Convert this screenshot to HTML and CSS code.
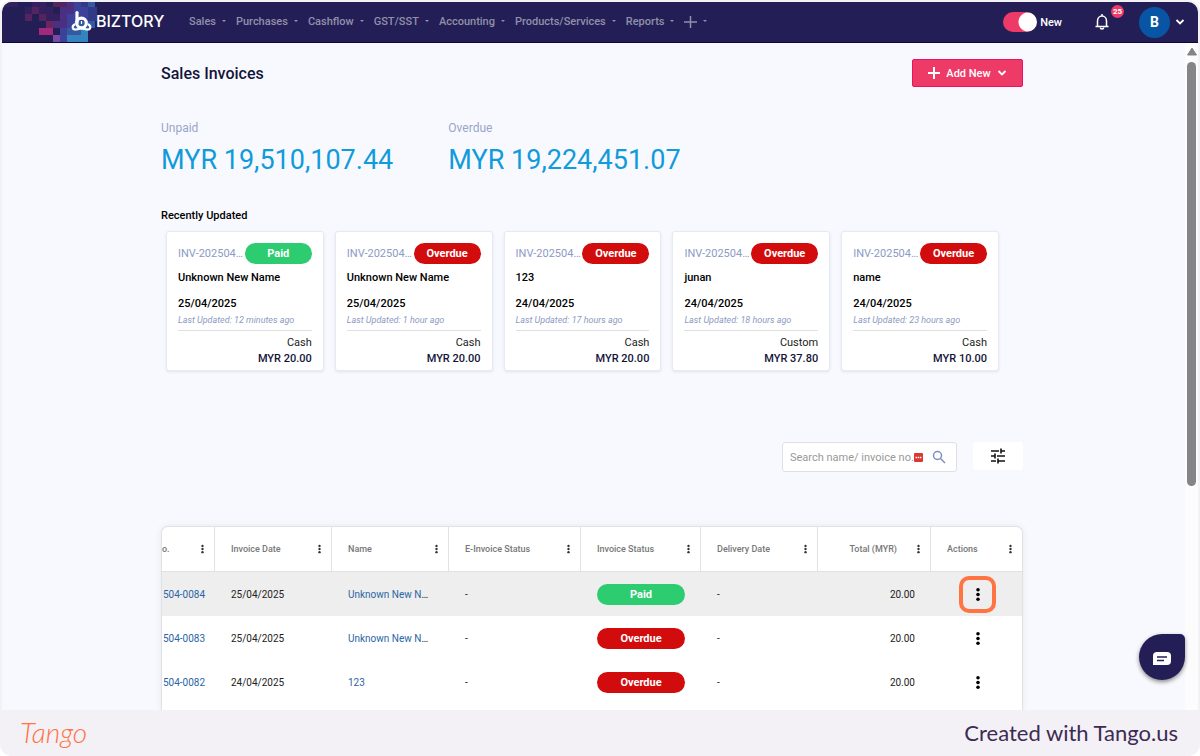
FILE: index.html
```html
<!DOCTYPE html>
<html lang="en">
<head>
  <meta charset="UTF-8">
  <title>Sales Invoices</title>
  <link rel="stylesheet" href="styles.css">
</head>
<body>
  <svg class="sprite" aria-hidden="true">
    <symbol id="dots" viewBox="0 0 4 16">
      <circle cx="2" cy="3" r="1.9"/><circle cx="2" cy="8" r="1.9"/><circle cx="2" cy="13" r="1.9"/>
    </symbol>
    <symbol id="chevron" viewBox="0 0 10 8">
      <path d="M1.5 2l3.5 3.5L8.500 2" fill="none" stroke="currentColor" stroke-width="1.8"/>
    </symbol>
  </svg>

  <div class="app">
    <header class="topbar">
      <svg class="pixels" width="98" height="40" viewBox="0 0 98 40" aria-hidden="true">
        <path fill="#34205e" d="M2 0h14v5H2zM23 5h7v7h-7zM30 0h14v12H30zM44 5h7v14h-7zM51 12h7v14h-7z"/>
        <path fill="#54245f" d="M23 12h7v7h-7zM30 12h7v-7h-7zM37 12h7v7h-7zM51 0h14v5H51z"/>
        <path fill="#69265f" d="M37 26h7v7h-7zM44 19h7v7h-7z"/>
        <path fill="#a12a7c" d="M37 26h14v7H37z"/>
        <path fill="#4a2f82" d="M58 5h7v28h-7zM51 19h7v7h-7zM65 0h7v12h-7z"/>
        <path fill="#7b4aa5" d="M51 33h7v7h-7z"/>
        <path fill="#3c419a" d="M65 12h7v14h-7zM72 0h7v19h-7zM79 5h7v14h-7zM58 26h7v14h-7z"/>
        <path fill="#35599f" d="M65 26h7v7h-7zM72 19h7v14h-7zM79 19h14v7H79zM86 0h7v5h-7z"/>
        <path fill="#3283bf" d="M65 33h14v7H65zM79 26h7v14h-7z"/>
        <path fill="#303a86" d="M86 5h9v14h-9zM79 0h7v5h-7z"/>
      </svg>
      <a class="brand" href="#">
        <svg width="21" height="22" viewBox="0 0 21 22" aria-hidden="true">
          <path d="M6 2.500v10" stroke="#fff" stroke-width="3.200" stroke-linecap="round"/>
          <circle cx="10.500" cy="13" r="4.800" fill="none" stroke="#fff" stroke-width="3.200"/>
          <path d="M3.500 14.500c-3 2-2 5 1 5 3 0 3-1 6-1s3 1 6 1c3 0 4-3 1-5" fill="none" stroke="#fff" stroke-width="2.200" stroke-linecap="round"/>
          <path d="M10.500 11v3" stroke="#fff" stroke-width="1.200"/>
        </svg>
        <span>BIZTORY</span>
      </a>
      <nav class="nav">
        <a href="#">Sales</a>
        <a href="#">Purchases</a>
        <a href="#">Cashflow</a>
        <a href="#">GST/SST</a>
        <a href="#">Accounting</a>
        <a href="#">Products/Services</a>
        <a href="#">Reports</a>
        <a href="#" aria-label="Create">
          <svg width="13" height="13" viewBox="0 0 13 13"><path d="M6.500 1v12M0 7h13" stroke="currentColor" stroke-width="1.500"/></svg>
        </a>
      </nav>
      <div class="account">
        <label class="switch"><input type="checkbox" checked>New</label>
        <button class="bell" aria-label="Notifications">
          <svg width="16" height="18" viewBox="0 0 16 18" fill="none" stroke="#fff" stroke-width="1.500">
            <path d="M1.500 13.500h13M3.500 13V8a4.500 5 0 0 1 9 0v5M8 1v2"/><path d="M6.300 14.500a1.700 1.500 0 0 0 3.400 0"/>
          </svg>
          <span class="count">25</span>
        </button>
        <button class="profile" aria-label="Account">
          <span class="avatar">B</span>
          <svg width="10" height="8"><use href="#chevron"/></svg>
        </button>
      </div>
    </header>

    <div class="view">
      <main class="content">
        <div class="heading">
          <h1>Sales Invoices</h1>
          <button class="add">
            <svg width="12" height="12" viewBox="0 0 12 12"><path d="M6 0v12M0 6h12" stroke="currentColor" stroke-width="2"/></svg>
            Add New
            <svg width="10" height="8"><use href="#chevron"/></svg>
          </button>
        </div>

        <div class="stats">
          <div><p class="label">Unpaid</p><p class="amount">MYR 19,510,107.44</p></div>
          <div><p class="label">Overdue</p><p class="amount">MYR 19,224,451.07</p></div>
        </div>

        <h2>Recently Updated</h2>
        <div class="cards">
          <article class="card">
            <div class="card-top"><span class="number">INV-20250425</span><span class="badge paid">Paid</span></div>
            <p class="name">Unknown New Name</p>
            <p class="date">25/04/2025</p>
            <p class="updated">Last Updated: 12 minutes ago</p>
            <p class="terms">Cash</p>
            <p class="total">MYR 20.00</p>
          </article>
          <article class="card">
            <div class="card-top"><span class="number">INV-20250425</span><span class="badge">Overdue</span></div>
            <p class="name">Unknown New Name</p>
            <p class="date">25/04/2025</p>
            <p class="updated">Last Updated: 1 hour ago</p>
            <p class="terms">Cash</p>
            <p class="total">MYR 20.00</p>
          </article>
          <article class="card">
            <div class="card-top"><span class="number">INV-20250424</span><span class="badge">Overdue</span></div>
            <p class="name">123</p>
            <p class="date">24/04/2025</p>
            <p class="updated">Last Updated: 17 hours ago</p>
            <p class="terms">Cash</p>
            <p class="total">MYR 20.00</p>
          </article>
          <article class="card">
            <div class="card-top"><span class="number">INV-20250424</span><span class="badge">Overdue</span></div>
            <p class="name">junan</p>
            <p class="date">24/04/2025</p>
            <p class="updated">Last Updated: 18 hours ago</p>
            <p class="terms">Custom</p>
            <p class="total">MYR 37.80</p>
          </article>
          <article class="card">
            <div class="card-top"><span class="number">INV-20250424</span><span class="badge">Overdue</span></div>
            <p class="name">name</p>
            <p class="date">24/04/2025</p>
            <p class="updated">Last Updated: 23 hours ago</p>
            <p class="terms">Cash</p>
            <p class="total">MYR 10.00</p>
          </article>
        </div>

        <div class="tools">
          <div class="search">
            <input type="text" placeholder="Search name/ invoice no." aria-label="Search name or invoice number">
            <svg width="9" height="9" viewBox="0 0 9 9"><rect width="9" height="9" rx="1" fill="#da3831"/><path d="M1.500 4.500h6" stroke="#fff" stroke-width="1.300" stroke-dasharray="1.500 .7"/></svg>
            <svg width="14" height="14" viewBox="0 0 14 14" fill="none" stroke="#7f8fc0" stroke-width="1.500"><circle cx="5.500" cy="5.500" r="4"/><path d="M8.500 8.500l4.500 4.500"/></svg>
          </div>
          <button class="filter" aria-label="Filters">
            <svg width="16" height="16" viewBox="0 0 16 16" stroke="#111" stroke-width="1.600"><path d="M1 3h8M11 3h4M11 0.500v5M1 8h4M7 8h8M5 5.500v5M1 13h5M8 13h7M8 10.500v5"/></svg>
          </button>
        </div>

        <div class="grid">
          <table>
            <colgroup><col class="c-no"><col class="c-date"><col class="c-name"><col class="c-einv"><col class="c-status"><col class="c-deliv"><col class="c-total"><col class="c-act"></colgroup>
            <thead>
              <tr>
                <th><div>o.<svg><use href="#dots"/></svg></div></th>
                <th><div>Invoice Date<svg><use href="#dots"/></svg></div></th>
                <th><div>Name<svg><use href="#dots"/></svg></div></th>
                <th><div>E-Invoice Status<svg><use href="#dots"/></svg></div></th>
                <th><div>Invoice Status<svg><use href="#dots"/></svg></div></th>
                <th><div>Delivery Date<svg><use href="#dots"/></svg></div></th>
                <th class="num"><div>Total (MYR)<svg><use href="#dots"/></svg></div></th>
                <th><div>Actions<svg><use href="#dots"/></svg></div></th>
              </tr>
            </thead>
            <tbody>
              <tr class="active">
                <td><a href="#">504-0084</a></td><td>25/04/2025</td><td><a href="#">Unknown New Name</a></td><td>-</td>
                <td><span class="badge paid">Paid</span></td><td>-</td><td class="num">20.00</td>
                <td><button class="more marked" aria-label="Actions"><svg><use href="#dots"/></svg></button></td>
              </tr>
              <tr>
                <td><a href="#">504-0083</a></td><td>25/04/2025</td><td><a href="#">Unknown New Name</a></td><td>-</td>
                <td><span class="badge">Overdue</span></td><td>-</td><td class="num">20.00</td>
                <td><button class="more" aria-label="Actions"><svg><use href="#dots"/></svg></button></td>
              </tr>
              <tr>
                <td><a href="#">504-0082</a></td><td>24/04/2025</td><td><a href="#">123</a></td><td>-</td>
                <td><span class="badge">Overdue</span></td><td>-</td><td class="num">20.00</td>
                <td><button class="more" aria-label="Actions"><svg><use href="#dots"/></svg></button></td>
              </tr>
            </tbody>
          </table>
        </div>
      </main>
      <div class="scrollbar" aria-hidden="true">
        <svg width="12" height="9" viewBox="0 0 12 9"><path d="M6 1l4.500 7h-9z" fill="#858585" stroke="#858585" stroke-linejoin="round"/></svg>
        <div class="thumb"></div>
      </div>
      <button class="chat" aria-label="Chat">
        <svg width="18" height="16" viewBox="0 0 18 16"><path d="M4 1h10a4 4 0 0 1 4 4v5a4 4 0 0 1-4 4H0V5a4 4 0 0 1 4-4z" fill="#fff"/><path d="M4 6h10M4 9.500h7" stroke="#231f56" stroke-width="1.500"/></svg>
      </button>
    </div>
  </div>

  <footer class="footer">
    <a class="tango" href="#">Tango</a>
    <span>Created with Tango.us</span>
  </footer>
</body>
</html>
```
FILE: styles.css
```css
* {
  box-sizing: border-box;
}
html {
  background: #fff;
}
body {
  margin: 0;
  padding: 2px 2px 0;
  height: 100vh;
  display: flex;
  flex-direction: column;
  border-radius: 12px;
  background: #f3f0f6;
  font-family: Roboto, "Liberation Sans", sans-serif;
  font-size: 11px;
  color: #222;
}
h1, h2, p {
  margin: 0;
}
a {
  color: inherit;
  text-decoration: none;
}
button {
  padding: 0;
  border: none;
  background: none;
  font: inherit;
  color: inherit;
  cursor: pointer;
}
.sprite {
  position: absolute;
  width: 0;
  height: 0;
}
.app {
  flex: 1;
  min-height: 0;
  display: flex;
  flex-direction: column;
  border-radius: 10px 10px 0 0;
  overflow: hidden;
  background: #f8f9fe;
}

/* top bar */
.topbar {
  position: relative;
  flex: none;
  height: 41px;
  display: flex;
  align-items: center;
  padding: 0 13px 0 69px;
  background: #231f56;
  border-bottom: 1px solid #0b0540;
  color: #fff;
}
.pixels {
  position: absolute;
  left: 0;
  top: 0;
}
.brand {
  position: relative;
  display: flex;
  align-items: center;
  gap: 4px;
  width: 118px;
  padding-bottom: 2px;
  font-family: Inter, sans-serif;
  font-size: 16px;
  font-weight: 500;
}
.nav {
  display: flex;
  align-items: center;
  gap: 10px;
  padding-bottom: 2px;
  color: #918fab;
  font-weight: 500;
}
.nav a {
  display: flex;
  align-items: center;
  gap: 6px;
}
.nav a::after {
  content: "";
  border: 2px solid transparent;
  border-top-color: currentColor;
  border-bottom: none;
}
.account {
  margin-left: auto;
  display: flex;
  align-items: center;
  font-weight: 500;
}
.switch {
  display: flex;
  align-items: center;
  gap: 3px;
}
.switch input {
  appearance: none;
  width: 34px;
  height: 20px;
  margin: 0;
  border-radius: 10px;
  background: radial-gradient(circle at 25px 10px, #fff 9px, #ee3a66 10px);
}
.bell {
  position: relative;
  height: 18px;
  margin-left: 32px;
}
.count {
  position: absolute;
  left: 17px;
  top: -8px;
  width: 13px;
  height: 13px;
  border-radius: 50%;
  background: #ee3a66;
  font-size: 8px;
  font-weight: 700;
  line-height: 13px;
}
.profile {
  display: flex;
  align-items: center;
  gap: 5px;
  margin-left: 29px;
}
.avatar {
  width: 31px;
  height: 31px;
  border-radius: 50%;
  background: #0855a5;
  font-size: 14px;
  font-weight: 700;
  line-height: 31px;
}

/* page */
.view {
  position: relative;
  flex: 1;
  min-height: 0;
  display: flex;
}
.content {
  width: 90%;
  max-width: 862px;
  margin: 0 auto;
  padding-top: 16px;
  display: flex;
  flex-direction: column;
}
.heading {
  display: flex;
  justify-content: space-between;
  align-items: center;
}
h1 {
  font-size: 16px;
  font-weight: 500;
  color: #14143a;
}
.add {
  display: flex;
  align-items: center;
  justify-content: center;
  gap: 6px;
  width: 111px;
  height: 28px;
  border: 1px solid #ee1160;
  border-radius: 2px;
  background: #ee3a66;
  color: #fff;
  font-weight: 500;
}
.stats {
  display: grid;
  grid-template-columns: repeat(3, 1fr);
  margin-top: 33px;
}
.label {
  font-size: 12px;
  line-height: 16px;
  color: #99a5cb;
}
.amount {
  margin-top: 8px;
  font-size: 27px;
  line-height: 32px;
  color: #119bdb;
}
h2 {
  margin: 33px 0 8px;
  font-size: 11px;
  line-height: 14px;
  font-weight: 500;
  color: #000;
}
.cards {
  display: grid;
  grid-template-columns: repeat(5, 1fr);
  gap: 11px;
  padding: 0 24px 0 5px;
}
.card {
  min-width: 0;
  height: 140px;
  padding: 11px;
  border: 1px solid #e6eaf4;
  border-radius: 3px;
  background: #fff;
  box-shadow: 0 1px 3px #dfe3ee;
}
.card p {
  line-height: 16px;
}
.card-top {
  display: flex;
  align-items: center;
}
.number {
  flex: 1;
  overflow: hidden;
  text-overflow: ellipsis;
  white-space: nowrap;
  color: #8d9ac4;
}
.badge {
  display: block;
  width: 67px;
  height: 21px;
  border-radius: 11px;
  background: #d20c0c;
  color: #fff;
  font-size: 11px;
  font-weight: 700;
  line-height: 21px;
  text-align: center;
}
.badge.paid {
  background: #2ecc71;
}
.name, .date {
  font-weight: 500;
  color: #000;
}
.card .name {
  margin: 6px 0 10px;
}
.card .updated {
  padding-bottom: 2px;
  border-bottom: 1px solid #dfe0e4;
  font-size: 9px;
  font-style: italic;
  color: #8d9ac4;
}
.terms {
  margin-top: 4px;
  text-align: right;
}
.total {
  text-align: right;
  font-weight: 500;
  color: #14143a;
}

/* search and filter */
.tools {
  display: flex;
  justify-content: flex-end;
  gap: 16px;
  margin-top: 71px;
}
.search {
  display: flex;
  align-items: center;
  width: 175px;
  height: 30px;
  padding: 0 10px 0 7px;
  border: 1px solid #dfe0e4;
  border-radius: 3px;
  background: #fff;
}
.search input {
  flex: 1;
  min-width: 0;
  padding: 0;
  border: none;
  outline: none;
  font: inherit;
}
.search input::placeholder {
  color: #999;
}
.search svg:last-child {
  margin-left: 9px;
}
.filter {
  width: 50px;
  height: 28px;
  border-radius: 3px;
  background: #fff;
}
.filter svg {
  display: block;
  margin: 0 auto;
}

/* invoice table */
.grid {
  flex: 1;
  margin-top: 54px;
  border: 1px solid #e2e2e4;
  border-bottom: none;
  border-radius: 7px 7px 0 0;
  background: #fff;
  box-shadow: 0 0 6px #e4e6ec;
  overflow: hidden;
}
table {
  width: 100%;
  table-layout: fixed;
  border-collapse: separate;
  border-spacing: 0;
}
.c-no { width: 53px; }
.c-date, .c-name, .c-deliv { width: 117px; }
.c-einv { width: 132px; }
.c-status { width: 120px; }
.c-total { width: 113px; }
th {
  height: 45px;
  padding: 0 10px 0 16px;
  border-right: 1px solid #e2e2e4;
  border-bottom: 1px solid #e2e2e4;
  font-size: 9px;
  font-weight: 500;
  text-align: left;
  color: #777;
}
th div {
  display: flex;
  align-items: center;
  justify-content: space-between;
  white-space: nowrap;
}
th svg {
  width: 3px;
  height: 10px;
  fill: #333;
}
th:last-child {
  border-right: none;
}
th.num div {
  justify-content: flex-end;
  gap: 20px;
}
td {
  height: 44px;
  padding: 0 16px;
  overflow: hidden;
  text-overflow: ellipsis;
  white-space: nowrap;
  font-size: 10px;
}
th:first-child {
  padding-left: 0;
}
td:first-child {
  padding: 0 0 0 1px;
}
td a {
  color: #2a65a5;
}
td .badge {
  width: 88px;
}
td:last-child {
  padding: 0 0 0 28px;
}
td.num {
  text-align: right;
}
.active td {
  background: #eee;
}
.more {
  display: flex;
  align-items: center;
  justify-content: center;
  width: 37px;
  height: 37px;
}
.more svg {
  width: 4px;
  height: 15px;
  fill: #000;
}
.marked {
  border: 4px solid #ff7442;
  border-radius: 10px;
}

.scrollbar {
  flex: none;
  width: 13px;
  margin-left: 3px;
  padding: 4px 0 0 1px;
  background: #fcfcfc;
}
.scrollbar svg {
  display: block;
}
.thumb {
  width: 9px;
  height: 64%;
  margin: 6px 0 0 1px;
  border-radius: 5px;
  background: #858585;
}
.chat {
  position: absolute;
  right: 13px;
  bottom: 30px;
  width: 46px;
  height: 46px;
  border-radius: 50% 5px 50% 50%;
  background: #231f56;
  box-shadow: 0 2px 4px #888;
}
.chat svg {
  display: block;
  margin: 3px auto 0;
}

.footer {
  flex: none;
  display: flex;
  align-items: center;
  justify-content: space-between;
  height: 46px;
  padding: 0 20px 2px 18px;
  font-family: Lato, sans-serif;
  font-size: 22px;
  color: #3c2b52;
}
.tango {
  font-size: 28px;
  font-style: italic;
  font-weight: 300;
  color: #ff7442;
}
```
